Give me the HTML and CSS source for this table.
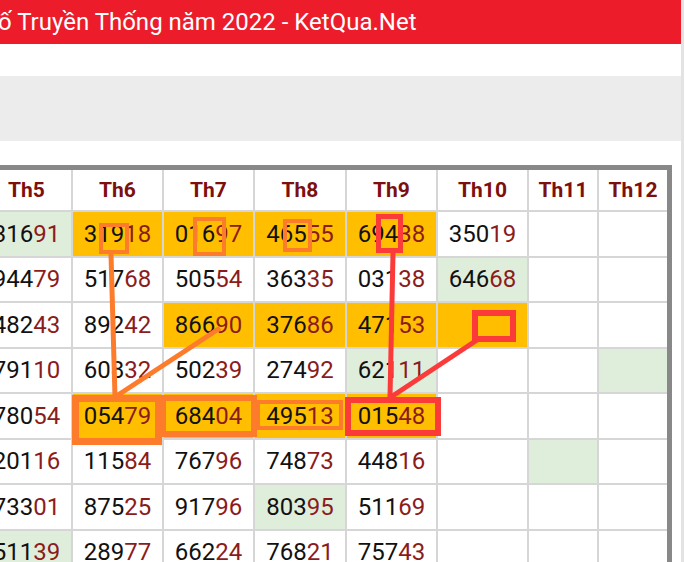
FILE: index.html
```html
<!DOCTYPE html>
<html lang="vi">
<head>
  <meta charset="UTF-8" />
  <title>Thống kê Xổ Số Truyền Thống năm 2022</title>
  <link rel="stylesheet" href="styles.css">
</head>
<body>
  <div class="page">
    <div class="title-bar">
      <h1>ố Truyền Thống năm 2022 - KetQua.Net</h1>
    </div>
    <div class="filter-band"></div>

    <table class="board">
      <colgroup>
        <col class="col-day"><col class="col-day"><col class="col-day"><col class="col-wide">
        <col class="col-day"><col class="col-day"><col class="col-mid"><col class="col-end">
      </colgroup>
      <thead>
        <tr><th>Th5</th><th>Th6</th><th>Th7</th><th>Th8</th><th>Th9</th><th>Th10</th><th>Th11</th><th>Th12</th></tr>
      </thead>
      <tbody>
        <tr>
          <td class="green">316<span class="tail">91</span></td>
          <td class="gold">319<span class="tail">18</span></td>
          <td class="gold">016<span class="tail">97</span></td>
          <td class="gold">465<span class="tail">55</span></td>
          <td class="gold">694<span class="tail">38</span></td>
          <td>350<span class="tail">19</span></td>
          <td></td><td></td>
        </tr>
        <tr>
          <td>944<span class="tail">79</span></td>
          <td>517<span class="tail">68</span></td>
          <td>505<span class="tail">54</span></td>
          <td>363<span class="tail">35</span></td>
          <td>031<span class="tail">38</span></td>
          <td class="green">646<span class="tail">68</span></td>
          <td></td><td></td>
        </tr>
        <tr>
          <td>482<span class="tail">43</span></td>
          <td>892<span class="tail">42</span></td>
          <td class="gold">866<span class="tail">90</span></td>
          <td class="gold">376<span class="tail">86</span></td>
          <td class="gold">471<span class="tail">53</span></td>
          <td class="gold"></td>
          <td></td><td></td>
        </tr>
        <tr>
          <td>791<span class="tail">10</span></td>
          <td>608<span class="tail">32</span></td>
          <td>502<span class="tail">39</span></td>
          <td>274<span class="tail">92</span></td>
          <td class="green">621<span class="tail">11</span></td>
          <td></td><td></td><td class="green"></td>
        </tr>
        <tr>
          <td>780<span class="tail">54</span></td>
          <td class="gold">054<span class="tail">79</span></td>
          <td class="gold">684<span class="tail">04</span></td>
          <td class="gold">495<span class="tail">13</span></td>
          <td class="gold">015<span class="tail">48</span></td>
          <td></td><td></td><td></td>
        </tr>
        <tr>
          <td>201<span class="tail">16</span></td>
          <td>115<span class="tail">84</span></td>
          <td>767<span class="tail">96</span></td>
          <td>748<span class="tail">73</span></td>
          <td>448<span class="tail">16</span></td>
          <td></td><td class="green"></td><td></td>
        </tr>
        <tr>
          <td>733<span class="tail">01</span></td>
          <td>875<span class="tail">25</span></td>
          <td>917<span class="tail">96</span></td>
          <td class="green">803<span class="tail">95</span></td>
          <td>511<span class="tail">69</span></td>
          <td></td><td></td><td></td>
        </tr>
        <tr>
          <td class="green">511<span class="tail">39</span></td>
          <td>289<span class="tail">77</span></td>
          <td>662<span class="tail">24</span></td>
          <td>768<span class="tail">21</span></td>
          <td>757<span class="tail">43</span></td>
          <td></td><td></td><td></td>
        </tr>
      </tbody>
    </table>
  </div>

  <!-- hand-drawn marks over the table -->
  <svg class="marks" width="685" height="562" viewBox="0 0 685 562">
    <g class="mark-orange">
      <rect x="101" y="225" width="26" height="27" stroke-width="4" />
      <rect x="195" y="219" width="29" height="35" stroke-width="4" />
      <rect x="285" y="221" width="25" height="29" stroke-width="4" />
      <line x1="111" y1="254" x2="115" y2="397" stroke-width="5" />
      <line x1="220" y1="328" x2="115" y2="397" stroke-width="5" />
      <rect x="163" y="398" width="91" height="36" stroke-width="6" />
      <rect x="75.5" y="398.5" width="83" height="43" stroke-width="7" />
      <rect x="258" y="402" width="83" height="26" stroke-width="4" />
    </g>
    <g class="mark-red">
      <rect x="378.5" y="216.5" width="22" height="34" stroke-width="5" />
      <line x1="393" y1="253" x2="390" y2="397" stroke-width="5" />
      <rect x="475" y="313" width="38" height="26" stroke-width="6" />
      <line x1="477" y1="340" x2="391" y2="397" stroke-width="5" />
      <rect x="348" y="400" width="90" height="33" stroke-width="6" />
    </g>
  </svg>
</body>
</html>
```

FILE: styles.css
```css
body { margin: 0; height: 562px; overflow: hidden; background: #fff; font-family: Roboto, 'Noto Sans', sans-serif; position: relative; }
.page { width: 681px; height: 562px; border-right: 3px solid #e3e3e3; overflow: hidden; }

.title-bar { height: 44px; background: #ec1c2a; color: #fff; }
.title-bar h1 { margin: 0 0 0 -2px; font-size: 24px; font-weight: normal; line-height: 44px; white-space: nowrap; }

.filter-band { height: 65px; margin: 32px 0 24px; background: #ececec; }

.board { border-collapse: separate; border-spacing: 0; table-layout: fixed; width: 695px; margin-left: -23px; border: 5px solid #888; border-bottom: 0; }
.col-day { width: 91px; }
.col-wide { width: 92px; }
.col-mid { width: 70px; }
.col-end { width: 68px; }
.board th, .board td { padding: 0; text-align: center; border-right: 2px solid #d6d6d6; border-bottom: 2px solid #d6d6d6; }
.board th:last-child, .board td:last-child { border-right: 0; }
.board th { height: 40px; font-size: 21px; font-weight: bold; color: #7d0f0f; }
.board td { height: 43.5px; font-size: 24px; color: #111; }
.tail { color: #8b1c1c; }
.gold { background: #ffbf00; }
.green { background: #dfeedb; }

.marks { position: absolute; left: 0; top: 0; }
.marks rect, .marks line { fill: none; }
.mark-orange { stroke: #fd7c2b; }
.mark-red { stroke: #fb3a3a; }
```
